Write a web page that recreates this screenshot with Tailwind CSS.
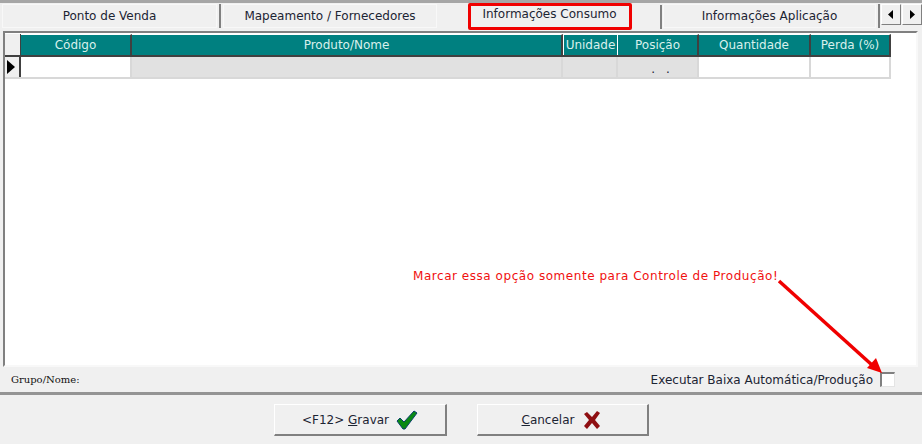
<!DOCTYPE html>
<html lang="en">
<head>
    <meta charset="UTF-8">
    <meta name="viewport" content="width=device-width, initial-scale=1.0">
    <title>Informações Consumo</title>
    <script src="https://cdn.jsdelivr.net/npm/@tailwindcss/browser@4"></script>
</head>
<body class="relative w-[922px] h-[444px] overflow-hidden bg-[#f0f0f0] font-['DejaVu_Sans',sans-serif] text-[12px] text-[#1c2433]">

    <!-- Tabs -->
    <div class="border-t-[3px] border-[#a6a6a6] h-[31px] pt-px pl-[2px] flex items-start">
        <div class="w-[215px] h-[24px] border border-[#f8f8f8] flex items-center justify-center">Ponto de Venda</div>
        <div class="w-[2px] h-[24px] ml-[2px] bg-[#808080] mr-[2px]"></div>
        <div class="w-[214px] h-[24px] border border-[#f8f8f8] flex items-center justify-center">Mapeamento / Fornecedores</div>
        <div class="w-[2px] h-[24px] mr-[4px]"></div>
        <div class="w-[213px] h-[27px] -mt-[1px] mr-[4px] bg-[#f0f0f0] flex items-start justify-center pt-[2px]">Informações Consumo</div>
        <div class="w-[2px] h-[24px] bg-[#808080] mr-[1px] mt-[1px]"></div>
        <div class="w-[213px] h-[24px] border border-[#f8f8f8] flex items-center justify-center">Informações Aplicação</div>
        <div class="w-[2px] h-[24px] ml-[2px] bg-[#808080] mr-[1px]"></div>
        <div class="w-[20px] h-[21px] border border-white border-r-[#808080] border-b-[#808080] flex items-center justify-center">
            <svg width="6" height="9" viewBox="0 0 6 9"><path d="M5 0V9L0 4.500Z" fill="#000"/></svg>
        </div>
        <div class="w-[20px] h-[21px] ml-px border border-white border-r-[#808080] border-b-[#808080] flex items-center justify-center">
            <svg width="6" height="9" viewBox="0 0 6 9"><path d="M1 0V9L6 4.500Z" fill="#000"/></svg>
        </div>
    </div>

    <!-- Grid -->
    <div class="ml-[3px] mr-[4px] h-[336px] bg-white border-l-2 border-t-2 border-b-2 border-[#808080] border-r-[#f8f8f8] border-b-[#f8f8f8] border-r-2">
        <div class="grid grid-cols-[16px_111px_431px_55px_81px_112px_80px] w-[886px] h-[24px] pt-[1px] text-[#d8f0ec] border-b-2 border-[#404040]">
            <div class="bg-[#f0f0f0] border-r border-[#404040]"></div>
            <div class="bg-[#008080] border-t border-t-white border-r-2 border-[#404040] flex items-center justify-center">Código</div>
            <div class="bg-[#008080] border-t border-t-white border-r-2 border-[#404040] flex items-center justify-center">Produto/Nome</div>
            <div class="bg-[#008080] border border-white border-b-0 flex items-center justify-center">Unidade</div>
            <div class="bg-[#008080] border-t border-t-white border-r-2 border-[#404040] flex items-center justify-center">Posição</div>
            <div class="bg-[#008080] border-t border-t-white border-r-2 border-[#404040] flex items-center justify-center">Quantidade</div>
            <div class="bg-[#008080] border-t border-t-white border-r-2 border-[#404040] flex items-center justify-center">Perda (%)</div>
        </div>
        <div class="grid grid-cols-[16px_111px_431px_55px_81px_112px_80px] w-[886px] h-[22px] border-b-2 border-[#d8d8d8]">
            <div class="bg-[#f0f0f0] border-r-2 border-[#404040] flex items-center pl-[2px]">
                <svg width="8" height="14" viewBox="0 0 8 14"><path d="M0 0L8 7L0 14Z" fill="#000"/></svg>
            </div>
            <div class="bg-white border-r-2 border-[#d8d8d8]"></div>
            <div class="bg-[#e1e1e1] border-r-2 border-[#d8d8d8]"></div>
            <div class="bg-[#e1e1e1] border-r-2 border-[#d8d8d8]"></div>
            <div class="bg-[#e1e1e1] border-r-2 border-[#d8d8d8] flex items-end justify-center gap-[11px] pl-[6px] leading-[16px]"><span>.</span><span>.</span></div>
            <div class="bg-white border-r-2 border-[#d8d8d8]"></div>
            <div class="bg-white border-r-2 border-[#d8d8d8]"></div>
        </div>
    </div>

    <!-- Status row -->
    <div class="h-[25px] pl-[11px] pr-[27px] flex items-center justify-between border-b-[3px] border-[#949494] box-content">
        <span class="font-['DejaVu_Serif',serif] text-[10px] text-[#111]">Grupo/Nome:</span>
        <div class="flex items-center gap-[7px]">
            <span>Executar Baixa Automática/Produção</span>
            <div class="w-[15px] h-[15px] bg-white border border-[#e4e4e4] border-l-2 border-t-2 border-l-[#808080] border-t-[#808080]"></div>
        </div>
    </div>

    <!-- Buttons -->
    <div class="flex gap-[30px] pt-[9px] pl-[274px]">
        <button class="w-[173px] h-[32px] bg-[#f0f0f0] border border-white border-r-2 border-b-2 border-r-[#808080] border-b-[#808080] flex items-center justify-center gap-[7px]">
            <span>&lt;F12&gt; <u>G</u>ravar</span>
            <svg width="22" height="20" viewBox="0 0 22 20"><path d="M1 11L4 8L8 12L18 1L21 3L9 19H7Z" fill="#0a8a14" stroke="#0a3f6b" stroke-width="1"/></svg>
        </button>
        <button class="w-[172px] h-[32px] bg-[#f0f0f0] border border-white border-r-2 border-b-2 border-r-[#808080] border-b-[#808080] flex items-center justify-center gap-[9px]">
            <span><u>C</u>ancelar</span>
            <svg class="mr-[2px]" width="18" height="18" viewBox="0 0 18 18"><path d="M1 3L4 1L9 6L14 0L17 2L12 9L17 15L14 18L9 12L4 18L1 15L6 9Z" fill="#8f0f12"/></svg>
        </button>
    </div>

    <!-- Annotations drawn over the form -->
    <div class="absolute left-[468px] top-[3px] w-[164px] h-[27px] border-[3px] border-[#f00000] rounded-[2px]"></div>
    <div class="absolute left-[413px] top-[267px] text-[#f01010] tracking-[0.54px]">Marcar essa opção somente para Controle de Produção!</div>
    <svg class="absolute left-0 top-0" width="922" height="444" viewBox="0 0 922 444">
        <line x1="779" y1="281" x2="872" y2="365" stroke="#f00000" stroke-width="3.500"/>
        <path d="M882 373L867 368L876 358Z" fill="#f00000"/>
    </svg>
</body>
</html>
